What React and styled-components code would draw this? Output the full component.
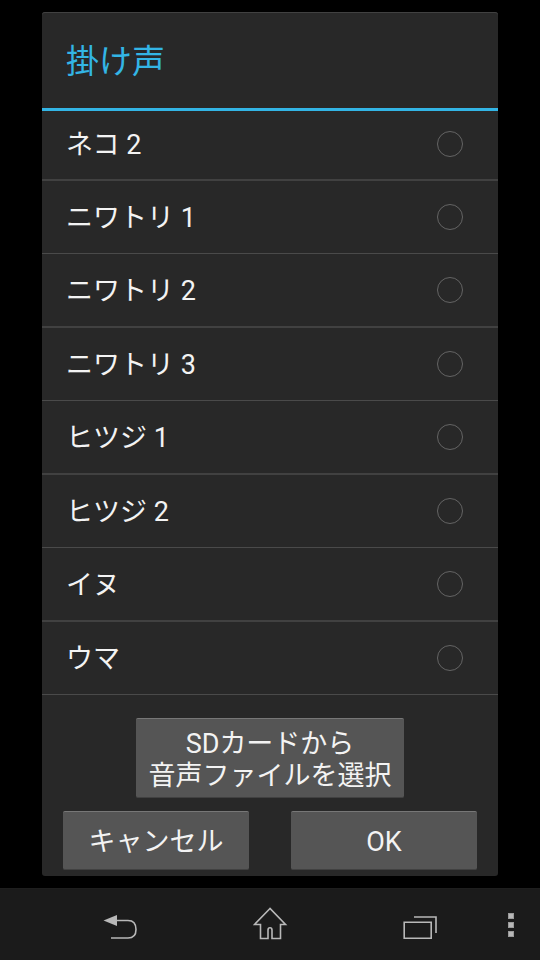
import React, { useState } from "react";
import styled, { createGlobalStyle } from "styled-components";

const voices = [
  "ネコ 2",
  "ニワトリ 1",
  "ニワトリ 2",
  "ニワトリ 3",
  "ヒツジ 1",
  "ヒツジ 2",
  "イヌ",
  "ウマ",
];

const NavBar = () => (
  <Nav>
    <NavButton $left={103} aria-label="back">
      <svg width="34" height="26" viewBox="0 0 34 26" fill="none">
        <path d="M0.5 6.5L14 1V12Z" fill="#b8b8b8" />
        <path
          d="M14 6.5H25C30.5 6.5 33 10 33 15.5S30.5 24 25 24H8"
          stroke="#b8b8b8"
          strokeWidth="1.6"
        />
      </svg>
    </NavButton>
    <NavButton $left={253} $top={18} aria-label="home">
      <svg width="35" height="33" viewBox="0 0 35 33" fill="none">
        <path
          d="M17 1.5L1.5 17.5H7.5V31.5H15V23C15 20 19 20 19 23V31.5H27.5V17.5H32.5Z"
          stroke="#b8b8b8"
          strokeWidth="1.6"
        />
      </svg>
    </NavButton>
    <NavButton $left={403} $top={26} aria-label="recent apps">
      <svg width="35" height="25" viewBox="0 0 35 25" fill="none" stroke="#b8b8b8" strokeWidth="1.6">
        <path d="M1.2 7.2H28.2V23.2H1.2Z" />
        <path d="M11 2H33V18" />
      </svg>
    </NavButton>
    <NavButton $left={508} $top={24} aria-label="menu">
      <Dot />
      <Dot />
      <Dot />
    </NavButton>
  </Nav>
);

const App = () => {
  const [selected, setSelected] = useState(null);

  return (
    <Screen>
      <GlobalStyle />
      <Dialog>
        <Title>掛け声</Title>
        <ListCon>
          <List>
            {voices.map((name, index) => (
              <Row key={name} onClick={() => setSelected(index)}>
                <Name>{name}</Name>
                <Radio $checked={selected === index} />
              </Row>
            ))}
          </List>
        </ListCon>
        <ButtonArea>
          <FileButton>
            SDカードから
            <br />
            音声ファイルを選択
          </FileButton>
          <Actions>
            <ActionButton>キャンセル</ActionButton>
            <ActionButton>OK</ActionButton>
          </Actions>
        </ButtonArea>
      </Dialog>
      <NavBar />
    </Screen>
  );
};

const GlobalStyle = createGlobalStyle`
  * {
    box-sizing: border-box;
  }
  body {
    margin: 0;
    background: #000;
  }
`;
const Screen = styled.div`
  width: 540px;
  height: 960px;
  padding-top: 12px;
  display: flex;
  flex-direction: column;
  justify-content: space-between;
  overflow: hidden;
  background: #000;
  color: #f3f3f3;
  font-family: Roboto, "Noto Sans CJK JP", sans-serif;
`;
const Dialog = styled.div`
  width: 456px;
  height: 864px;
  margin: 0 auto;
  display: flex;
  flex-direction: column;
  border-radius: 3px;
  background: #282828;
  box-shadow: inset 0 1px 0 #414141;
`;
const Title = styled.h1`
  height: 99px;
  margin: 0;
  padding: 0 24px;
  border-bottom: 3px solid #33b5e5;
  font-size: 33px;
  font-weight: 400;
  line-height: 99px;
  color: #33b5e5;
`;
const ListCon = styled.div`
  height: 584px;
  overflow: hidden;
`;
/* the list is scrolled a little under the title */
const List = styled.ul`
  margin: -3px 0 0;
  padding: 0;
  list-style: none;
`;
const Row = styled.li`
  height: 73px;
  padding: 0 35px 0 24px;
  display: flex;
  align-items: center;
  justify-content: space-between;
  border-bottom: 1px solid #4a4a4a;

  &:nth-child(odd) {
    height: 74px;
    border-bottom: 2px solid #414141;
  }
  &:first-child {
    height: 73px;
  }
`;
const Name = styled.span`
  padding-top: 2px;
  font-size: 27px;
  line-height: 40px;
  white-space: pre;
`;
const Radio = styled.span`
  width: 26px;
  height: 26px;
  border: 1px solid #646464;
  border-radius: 50%;
  background: ${({ $checked }) => ($checked ? "#33b5e5" : "transparent")};
`;
const ButtonArea = styled.div`
  padding: 23px 21px 0;
  display: flex;
  flex-direction: column;
  align-items: center;
  gap: 13px;
`;
const Button = styled.button`
  padding: 3px 0 0;
  border: 0;
  border-top: 1px solid #777;
  border-bottom: 1px solid #414141;
  border-radius: 2px;
  background: #555;
  color: #f3f3f3;
  font-family: inherit;
  font-size: 27px;
  line-height: 32px;
`;
const FileButton = styled(Button)`
  width: 268px;
  height: 80px;
  padding-top: 4px;
`;
const Actions = styled.div`
  width: 100%;
  display: flex;
  justify-content: space-between;
`;
const ActionButton = styled(Button)`
  width: 186px;
  height: 59px;
`;
const Nav = styled.nav`
  position: relative;
  height: 72px;
  background: #1b1b1b;
  border-top: 1px solid #1e1e1e;
`;
const NavButton = styled.button`
  position: absolute;
  left: ${({ $left }) => $left}px;
  top: ${({ $top }) => $top || 25}px;
  padding: 0;
  border: 0;
  display: flex;
  flex-direction: column;
  gap: 3px;
  background: none;
`;
const Dot = styled.i`
  width: 6px;
  height: 6px;
  border: 1px solid #9a9a9a;
  background: #b8b8b8;
`;

export default App;
